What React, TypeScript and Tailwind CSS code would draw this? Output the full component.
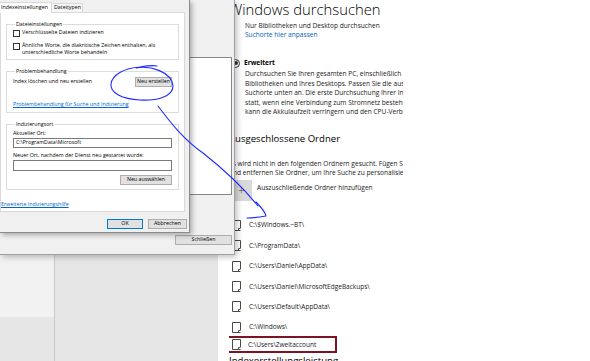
const ui = "font-['Open_Sans','Noto_Sans',sans-serif]";

function FolderIcon() {
  return (
    <svg width="9" height="11" viewBox="0 0 9 11" className="shrink-0">
      <path d="M0.5 0.5 H8.5 V8 M8.5 10.5 H0.5 V0.5" fill="none" stroke="#4a4a4a" strokeWidth="1" />
      <path d="M6.5 10.5 V8.5 H8.5" fill="none" stroke="#4a4a4a" strokeWidth="1" />
    </svg>
  );
}

function FolderRow({ path }: { path: string }) {
  return (
    <div className="h-[20.4px] flex items-center pl-[3px] gap-[8px]">
      <FolderIcon />
      <span className="text-[6.5px] text-[#1a1a1a] whitespace-nowrap">{path}</span>
    </div>
  );
}

function Checkbox({ children }: { children: React.ReactNode }) {
  return (
    <div className="flex items-start gap-[2px]">
      <div className="w-[7px] h-[7px] border border-[#333] bg-white shrink-0 mt-[1px]" />
      <div className="leading-[7px]">{children}</div>
    </div>
  );
}

function Btn({ label, w, primary }: { label: string; w: string; primary?: boolean }) {
  return (
    <div
      className={`${w} h-[10px] bg-[#e1e1e1] border ${primary ? "border-[#0078d7]" : "border-[#adadad]"} flex items-center justify-center text-[5.3px] text-black`}
    >
      {label}
    </div>
  );
}

export default function App() {
  const folders = [
    "C:\\$Windows.~BT\\",
    "C:\\ProgramData\\",
    "C:\\Users\\Daniel\\AppData\\",
    "C:\\Users\\Daniel\\MicrosoftEdgeBackups\\",
    "C:\\Users\\Default\\AppData\\",
    "C:\\Windows\\",
  ];

  return (
    <div className={`relative w-[590px] h-[361px] overflow-hidden flex bg-white ${ui}`}>
      {/* desktop behind the windows */}
      <div className="w-[218px] flex shrink-0">
        <div className="w-[55px] flex flex-col border-r border-[#c9c9c9]">
          <div className="h-[317px] bg-[#f2f2f2]" />
          <div className="flex-1 bg-[#e6e6e6]" />
        </div>
        <div className="flex-1 bg-[#e6e6e6]" />
      </div>

      {/* settings page */}
      <div className="flex-1 bg-white">
        <div className="ml-[11px] w-[174px] overflow-hidden text-[#1a1a1a]">
          <div className="h-[18px] leading-[18px] text-[14.8px] font-light text-black whitespace-nowrap">
            Windows durchsuchen
          </div>
          <div className="pl-[16px] mt-[2.5px] text-[6.6px] leading-[9px] whitespace-nowrap">
            <div>Nur Bibliotheken und Desktop durchsuchen</div>
            <div className="text-[#0063b1]">Suchorte hier anpassen</div>
          </div>
          <div className="mt-[20px] h-[9px] flex items-center gap-[4px] pl-[2px]">
            <div className="w-[9px] h-[9px] rounded-full border border-[#333] flex items-center justify-center">
              <div className="w-[4px] h-[4px] rounded-full bg-[#333]" />
            </div>
            <span className="text-[6.6px] font-bold text-black">Erweitert</span>
          </div>
          <div className="pl-[16px] mt-[1.75px] text-[6.6px] leading-[9.5px] whitespace-nowrap">
            <div>Durchsuchen Sie Ihren gesamten PC, einschließlich aller</div>
            <div>Bibliotheken und Ihres Desktops. Passen Sie die ausgeschlossenen</div>
            <div>Suchorte unten an. Die erste Durchsuchung Ihrer Inhalte findet</div>
            <div>statt, wenn eine Verbindung zum Stromnetz besteht. Dies</div>
            <div>kann die Akkulaufzeit verringern und den CPU-Verbrauch erhöhen.</div>
          </div>
          <div className="mt-[15.5px] h-[14px] leading-[14px] text-[9.6px] text-black whitespace-nowrap">
            Ausgeschlossene Ordner
          </div>
          <div className="mt-[12.5px] text-[6.6px] leading-[9px] whitespace-nowrap">
            <div>Es wird nicht in den folgenden Ordnern gesucht. Fügen Sie Ordner hinzu</div>
            <div>und entfernen Sie Ordner, um Ihre Suche zu personalisieren.</div>
          </div>
          <div className="mt-[3.5px] flex items-start gap-[5px] pl-[2px]">
            <div className="w-[21px] h-[21px] bg-[#d9d9d9] flex items-center justify-center text-[12px] font-light text-[#444] leading-none">
              +
            </div>
            <span className="text-[6.6px] mt-[3px] whitespace-nowrap">Auszuschließende Ordner hinzufügen</span>
          </div>
          <div className="mt-[13.8px]">
            {folders.map((f) => (
              <FolderRow key={f} path={f} />
            ))}
          </div>
          <div className="-mt-[1px] -ml-[4px] w-[112px] h-[17px] border-2 border-[#7d1424] flex items-center pl-[5px] gap-[7px]">
            <FolderIcon />
            <span className="text-[6.5px] whitespace-nowrap">C:\Users\Zweitaccount</span>
          </div>
          <div className="mt-[1px] h-[14px] leading-[14px] text-[9.6px] text-black whitespace-nowrap">
            Indexerstellungsleistung
          </div>
        </div>
      </div>

      {/* Indizierungsoptionen window (behind) */}
      <div className="absolute left-0 top-0 w-[235px] h-[255px] bg-[#f0f0f0] border-r border-b border-[#a0a0a0] shadow-[2px_2px_6px_rgba(0,0,0,0.25)] flex flex-col">
        <div className="ml-[60px] mt-[57px] w-[172px] h-[138px] bg-white border border-[#828790]" />
        <div className="mt-auto mb-[9px] mr-[2px] self-end">
          <Btn label="Schließen" w="w-[57px]" />
        </div>
      </div>

      {/* Erweiterte Optionen dialog (front) */}
      <div className="absolute left-0 top-0 w-[190px] h-[233px] bg-[#f0f0f0] border-r border-b border-[#8c8c8c] shadow-[2px_2px_5px_rgba(0,0,0,0.3)] flex flex-col text-[5.3px] text-black">
        <div className="h-[12px] flex items-end">
          <div className="w-[52px] h-[11px] bg-white border-t border-r border-[#d9d9d9] flex items-center pl-[1px] relative top-[1px] z-10">
            Indexeinstellungen
          </div>
          <div className="w-[31px] h-[9px] bg-[#f7f7f7] border-t border-r border-[#d9d9d9] flex items-center pl-[2px]">
            Dateitypen
          </div>
        </div>
        <div className="w-[185px] h-[200px] bg-white border border-[#d9d9d9] px-[5px] flex flex-col">
          <fieldset className="mt-[8px] h-[39px] border border-[#dcdcdc] px-[6px]">
            <legend className="ml-[2px] px-[1px] leading-[7px]">Dateieinstellungen</legend>
            <div className="mt-[1px] flex flex-col gap-[5px]">
              <Checkbox>Verschlüsselte Dateien indizieren</Checkbox>
              <Checkbox>
                Ähnliche Worte, die diakritische Zeichen enthalten, als
                <br />
                unterschiedliche Worte behandeln
              </Checkbox>
            </div>
          </fieldset>
          <fieldset className="mt-[8px] h-[45px] border border-[#dcdcdc] px-[6px]">
            <legend className="ml-[2px] px-[1px] leading-[7px]">Problembehandlung</legend>
            <div className="flex items-center justify-between mt-[2px]">
              <span>Index löschen und neu erstellen</span>
              <Btn label="Neu erstellen" w="w-[37px]" />
            </div>
            <div className="mt-[14px] text-[#0066cc] underline">Problembehandlung für Suche und Indizierung</div>
          </fieldset>
          <fieldset className="mt-[8px] h-[69px] border border-[#dcdcdc] px-[6px]">
            <legend className="ml-[2px] px-[1px] leading-[7px]">Indizierungsort</legend>
            <div className="mt-[2px] leading-[7px]">Aktueller Ort:</div>
            <div className="mt-[1px] h-[10px] border border-[#7a7a7a] flex items-center pl-[2px]">
              C:\ProgramData\Microsoft
            </div>
            <div className="mt-[4px] leading-[7px]">Neuer Ort, nachdem der Dienst neu gestartet wurde:</div>
            <div className="mt-[1px] h-[11px] border border-[#7a7a7a]" />
            <div className="mt-[4px] flex justify-end">
              <Btn label="Neu auswählen" w="w-[52px]" />
            </div>
          </fieldset>
          <div className="mt-[11px] -ml-[5px] text-[#0066cc] underline">Erweiterte Indizierungshilfe</div>
        </div>
        <div className="mt-[7px] flex justify-end gap-[5px] pr-[2px]">
          <Btn label="OK" w="w-[36px]" primary />
          <Btn label="Abbrechen" w="w-[39px]" />
        </div>
      </div>

      {/* pen annotation */}
      <svg className="absolute inset-0 pointer-events-none" width="590" height="361" viewBox="0 0 590 361">
        <g fill="none" stroke="#1f2bff" strokeWidth="1.1" strokeLinecap="round" strokeLinejoin="round">
          <path d="M136 68 C 150 65, 172 72, 173 86 C 173 97, 156 101, 140 100 C 122 99, 110 93, 111 84 C 112 75, 124 68, 140 67 C 146 66, 152 65, 157 66" />
          <path d="M158 106 C 170 122, 184 140, 203 153 C 222 168, 242 186, 258 206" />
          <path d="M256 202 C 261 207, 265 211, 266 216 C 260 217, 253 218, 247 218" />
        </g>
      </svg>
    </div>
  );
}
